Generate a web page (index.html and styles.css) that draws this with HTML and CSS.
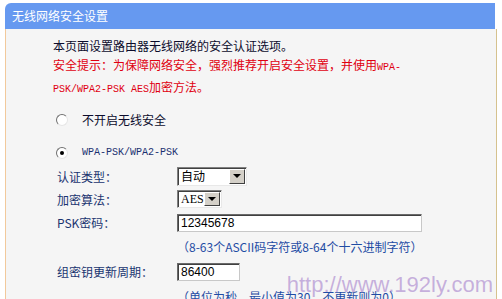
FILE: index.html
```html
<!DOCTYPE html>
<html lang="zh-CN">
<head>
<meta charset="utf-8">
<title>无线网络安全设置</title>
<link rel="stylesheet" href="styles.css">
</head>
<body>
<div class="panel">
  <div class="head">无线网络安全设置</div>
  <div class="body">
    <p class="intro">本页面设置路由器无线网络的安全认证选项。</p>
    <p class="warn">安全提示：为保障网络安全，强烈推荐开启安全设置，并使用<span class="mono">WPA-</span><br><span class="mono">PSK/WPA2-PSK AES</span>加密方法。</p>
    <div class="opt opt1"><span class="radio"></span><span class="opt-text">不开启无线安全</span></div>
    <div class="opt opt2"><span class="radio on"></span><span class="mono opt-mono">WPA-PSK/WPA2-PSK</span></div>
    <div class="form">
      <div class="lbl">认证类型：</div>
      <div class="cell"><div class="sel sel-auth"><span class="val">自动</span><span class="btn"><span class="tri"></span></span></div></div>
      <div class="lbl">加密算法：</div>
      <div class="cell"><div class="sel sel-enc"><span class="val serif">AES</span><span class="btn"><span class="tri"></span></span></div></div>
      <div class="lbl">PSK密码：</div>
      <div class="cell"><div class="inp inp-psk">12345678</div></div>
      <div class="cell hint">（8-63个ASCII码字符或8-64个十六进制字符）</div>
      <div class="lbl">组密钥更新周期：</div>
      <div class="cell"><div class="inp inp-period">86400</div></div>
      <div class="cell hint">（单位为秒，最小值为30，不更新则为0）</div>
    </div>
  </div>
  <div class="watermark">http://www.192ly.com</div>
</div>
</body>
</html>
```
FILE: styles.css
```css
html, body {
  margin: 0;
  background: #ffffff;
}
body {
  padding: 3px 5px 0;
  font: 12px "Noto Sans CJK SC", "Liberation Sans", sans-serif;
  color: #101030;
}
.panel {
  position: relative;
  width: 492px;
  height: 296px;
  overflow: hidden;
  display: flex;
  flex-direction: column;
}
.head {
  box-sizing: border-box;
  width: 490px;
  height: 27px;
  line-height: 26px;
  padding-left: 7px;
  background: #6699f0;
  color: #ffffff;
  border-radius: 6px 0 0 0;
}
.body {
  flex: 1;
  background: #f5f5f5;
  border-left: 1px solid #f2c99b;
  border-right: 1px solid #d6c28e;
  padding: 7px 0 0 47px;
}
p {
  margin: 0;
  line-height: 19px;
}
.intro { color: #0c0c2c; }
.warn { color: #e00010; }
.mono {
  font-family: "Liberation Mono", monospace;
  font-size: 10px;
}
.opt {
  display: flex;
  align-items: center;
  height: 19px;
  margin-left: 3px;
  color: #0c0c2c;
}
.opt1 { margin-top: 11px; }
.opt2 { margin-top: 14px; }
.opt-mono { color: #1a3070; }
.radio {
  position: relative;
  box-sizing: border-box;
  width: 12px;
  height: 12px;
  margin-right: 14px;
  border-radius: 50%;
  border: 1px solid;
  border-color: #707070 #e6e6e6 #e6e6e6 #707070;
  background: #ffffff;
}
.radio.on::after {
  content: "";
  position: absolute;
  left: 3px;
  top: 3px;
  width: 4px;
  height: 4px;
  border-radius: 50%;
  background: #000000;
}
.form {
  display: grid;
  grid-template-columns: 120px auto;
  grid-template-rows: 23px 23px 24px 24px 26px 24px;
  margin: 2.5px 0 0 4px;
  color: #1a3470;
}
.lbl, .cell {
  display: flex;
  align-items: center;
}
.hint {
  grid-column: 2;
  color: #1f4ca4;
}
.sel {
  box-sizing: border-box;
  display: flex;
  height: 19px;
  background: #ffffff;
  border: 1px solid;
  border-color: #808080 #e8e8e8 #e8e8e8 #808080;
  box-shadow: inset 1px 1px 0 #404040;
  color: #000000;
}
.sel-auth { width: 70px; }
.sel-enc { width: 45px; height: 18px; }
.sel .val {
  flex: 1;
  padding-left: 3px;
  line-height: 16px;
}
.serif {
  font-family: "Liberation Serif", serif;
  font-size: 12px;
}
.sel .btn {
  box-sizing: border-box;
  width: 16px;
  margin: 1px 1px 1px 0;
  display: flex;
  align-items: center;
  justify-content: center;
  background: #d4d0c8;
  border: 1px solid;
  border-color: #ffffff #404040 #404040 #ffffff;
}
.tri {
  width: 0;
  height: 0;
  border-left: 4px solid transparent;
  border-right: 4px solid transparent;
  border-top: 4px solid #000000;
}
.inp {
  box-sizing: border-box;
  height: 18px;
  line-height: 16px;
  padding-left: 3px;
  background: #ffffff;
  border: 1px solid;
  border-color: #6a6a6a #c8c8c8 #c8c8c8 #6a6a6a;
  box-shadow: inset 1px 1px 0 #404040;
  color: #000000;
  font-family: "Liberation Sans", sans-serif;
  font-size: 12px;
}
.inp-psk { width: 245px; }
.inp-period { width: 63px; }
.watermark {
  position: absolute;
  right: 4px;
  top: 271px;
  font-family: "Liberation Sans", sans-serif;
  font-size: 22px;
  line-height: 22px;
  color: rgba(150, 105, 195, 0.5);
  white-space: nowrap;
}
```
